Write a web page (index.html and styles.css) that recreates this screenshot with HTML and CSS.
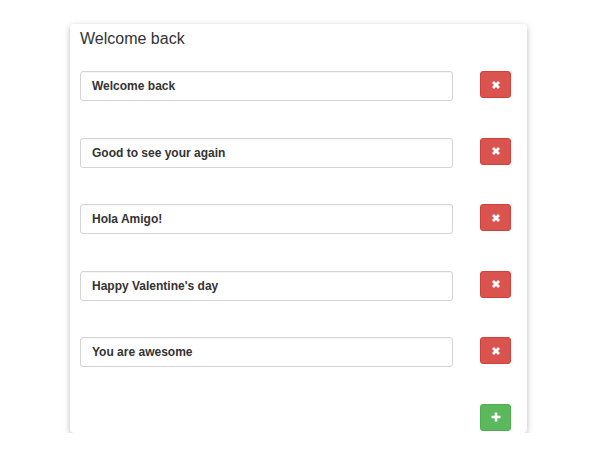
FILE: index.html
```html
<!DOCTYPE html>
<html>
<head>
<meta charset="utf-8">
<link rel="stylesheet" href="styles.css">
</head>
<body>
<div class="card">
  <h3 class="title">Welcome back</h3>
  <div class="list">
    <div class="row">
      <input class="field" type="text" value="Welcome back">
      <button class="btn btn-danger"><svg class="ico" viewBox="0 0 10 10"><path d="M2 2L8 8M8 2L2 8"/></svg></button>
    </div>
    <div class="row">
      <input class="field" type="text" value="Good to see your again">
      <button class="btn btn-danger"><svg class="ico" viewBox="0 0 10 10"><path d="M2 2L8 8M8 2L2 8"/></svg></button>
    </div>
    <div class="row">
      <input class="field" type="text" value="Hola Amigo!">
      <button class="btn btn-danger"><svg class="ico" viewBox="0 0 10 10"><path d="M2 2L8 8M8 2L2 8"/></svg></button>
    </div>
    <div class="row">
      <input class="field" type="text" value="Happy Valentine's day">
      <button class="btn btn-danger"><svg class="ico" viewBox="0 0 10 10"><path d="M2 2L8 8M8 2L2 8"/></svg></button>
    </div>
    <div class="row">
      <input class="field" type="text" value="You are awesome">
      <button class="btn btn-danger"><svg class="ico" viewBox="0 0 10 10"><path d="M2 2L8 8M8 2L2 8"/></svg></button>
    </div>
    <div class="row row-end">
      <button class="btn btn-success"><svg class="ico ico-plus" viewBox="0 0 10 10"><path d="M5 0.5V9.5M0.5 5H9.5"/></svg></button>
    </div>
  </div>
</div>
</body>
</html>
```

FILE: styles.css
```css
html, body {
  margin: 0;
  padding: 0;
  background: #ffffff;
}
body {
  font-family: "Liberation Sans", Arial, sans-serif;
  color: #333333;
}
.card {
  width: 457px;
  height: 409px;
  margin: 24px 0 0 70px;
  box-sizing: border-box;
  padding: 6px 16px 0 10px;
  background: #ffffff;
  border-radius: 4px;
  box-shadow: 0 2px 6px rgba(0, 0, 0, 0.28);
}
.title {
  margin: 0;
  font-size: 16px;
  line-height: 18px;
  font-weight: normal;
  color: #333333;
}
.list {
  margin-top: 23px;
  display: flex;
  flex-direction: column;
  gap: 36.6px;
}
.row {
  display: flex;
  align-items: flex-start;
  justify-content: space-between;
}
.row-end {
  justify-content: flex-end;
}
.field {
  width: 373px;
  height: 30px;
  box-sizing: border-box;
  margin: 0;
  padding: 0 11px;
  border: 1px solid #d4d4d4;
  border-radius: 3px;
  font-family: "Liberation Sans", Arial, sans-serif;
  font-size: 12px;
  font-weight: bold;
  color: #333333;
  background: #ffffff;
  box-shadow: inset 0 1px 1px rgba(0, 0, 0, 0.04);
  outline: none;
}
.btn {
  width: 31px;
  height: 27px;
  margin: 0;
  padding: 0;
  border-radius: 3px;
  display: flex;
  align-items: center;
  justify-content: center;
  cursor: pointer;
}
.btn-danger {
  background: #d9534f;
  border: 1px solid #d43f3a;
}
.btn-success {
  background: #5cb85c;
  border: 1px solid #4cae4c;
}
.ico {
  width: 10px;
  height: 10px;
  fill: none;
  stroke: #ffffff;
  stroke-width: 2.8;
  stroke-linecap: butt;
}
.ico-plus {
  width: 10px;
  height: 10px;
  stroke-width: 2.6;
}
```
